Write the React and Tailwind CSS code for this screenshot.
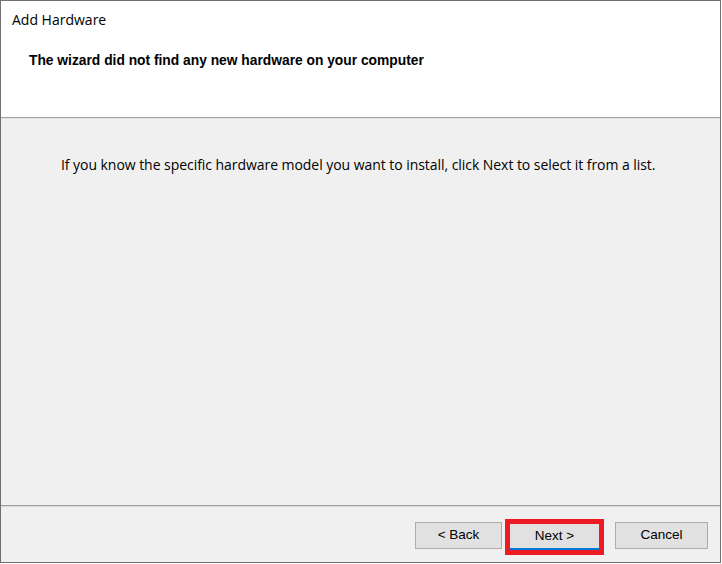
export default function App() {
  return (
    <div className="w-[722px] h-[564px] bg-white">
      <div className="w-[721px] h-[563px] border border-[#707070] flex flex-col bg-[#f0f0f0]">
        <div className="h-[116px] bg-white shrink-0">
          <div className="pl-[11px] pt-[9px] text-[14px] leading-[20px] text-black font-['Open_Sans','Noto_Sans',sans-serif]">
            Add Hardware
          </div>
          <div className="pl-[28px] pt-[23px] text-[13.8px] leading-[16px] font-bold text-black font-['Liberation_Sans',Arial,sans-serif]">
            The wizard did not find any new hardware on your computer
          </div>
        </div>
        <div className="h-px bg-[#a0a0a0]" />
        <div className="h-px bg-[#e3e3e3]" />
        <div className="flex-1 pl-[60px] pt-[36px] text-[14px] leading-[20px] text-black font-['Open_Sans','Noto_Sans',sans-serif] tracking-[-0.05px]">
          If you know the specific hardware model you want to install, click Next to select it from a list.
        </div>
        <div className="h-px bg-[#a0a0a0]" />
        <div className="h-px bg-[#d8d8d8]" />
        <div className="h-[55px] flex items-start justify-end pr-[12px] pt-[15px] font-['Liberation_Sans',Arial,sans-serif] text-[13.5px] text-black">
          <button className="w-[87px] h-[27px] bg-[#e1e1e1] border border-[#adadad]">&lt; Back</button>
          <div className="ml-[3px] -mt-[3px] border-[5px] border-[#ed1c24] w-[99px] h-[36px] flex">
            <button className="w-full h-full bg-[#e1e1e1] border-b-2 border-b-[#0078d7]">Next &gt;</button>
          </div>
          <button className="ml-[11px] w-[93px] h-[27px] bg-[#e1e1e1] border border-[#adadad]">Cancel</button>
        </div>
      </div>
    </div>
  )
}
